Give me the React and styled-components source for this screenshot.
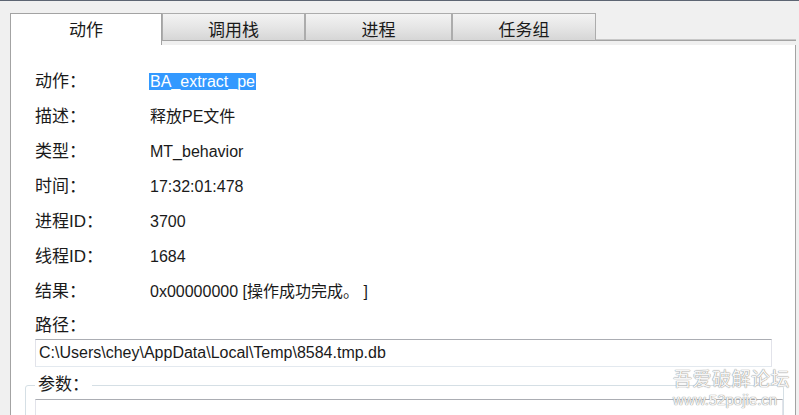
import React from "react";
import styled, { createGlobalStyle } from "styled-components";

const GlobalStyle = createGlobalStyle`
  html, body {
    margin: 0;
    padding: 0;
    background: #f0f0f0;
    overflow: hidden;
  }
`;

const Window = styled.div`
  position: relative;
  width: 799px;
  height: 415px;
  border-top: 1px solid #5d6573;
  box-sizing: border-box;
  padding-top: 12px;
  overflow: hidden;
  font-family: "Liberation Sans", "Noto Sans CJK SC", sans-serif;
  color: #1a1a1a;
`;

const TabStrip = styled.div`
  display: flex;
  align-items: flex-end;
  height: 32px;
  margin-left: 10px;
  width: 786px;
`;

const Tab = styled.div`
  box-sizing: border-box;
  width: ${(p) => p.$w}px;
  display: flex;
  align-items: center;
  justify-content: center;
  font-size: 17px;
  ${(p) =>
    p.$active
      ? `
    height: 32px;
    background: #fff;
    border: 1px solid #a3a3a3;
    border-bottom: none;
    padding-bottom: 2px;
  `
      : `
    height: 28px;
    margin-bottom: 4px;
    background: linear-gradient(#f3f3f3, #e6e6e6 50%, #d6d6d6);
    border: 1px solid #acacac;
    border-bottom-color: #a3a3a3;
    padding-top: 2px;
  `}
`;

const TabFiller = styled.div`
  flex: 1;
  height: 1px;
  margin-bottom: 4px;
  border-bottom: 1px solid #a3a3a3;
  background: #c8c8c8;
`;

const Panel = styled.div`
  margin-left: 10px;
  width: 786px;
  height: 400px;
  box-sizing: border-box;
  background: #fff;
  border-left: 1px solid #a3a3a3;
  border-right: 1px solid #a3a3a3;
  padding: 19px 23px 0 24px;
`;

const Fields = styled.div`
  display: grid;
  grid-template-columns: 115px 1fr;
  grid-auto-rows: 35px;
  align-items: center;
`;

const Label = styled.div`
  font-size: 17px;
  line-height: 22px;
`;

const Value = styled.div`
  font-size: 16px;
  line-height: 20px;
`;

const Selected = styled.span`
  background: #3399ff;
  color: #fff;
  padding: 0 1px;
  margin-left: -1px;
`;

const PathLabel = styled(Label)`
  height: 30px;
  padding-top: 6px;
  box-sizing: border-box;
`;

const TextBox = styled.div`
  box-sizing: border-box;
  height: ${(p) => p.$h || 28}px;
  border: 1px solid #e2e3ea;
  border-top-color: #abadb3;
  border-bottom-color: #e3e9ef;
  padding: 0 3px;
  display: flex;
  align-items: center;
  font-size: 16px;
  background: #fff;
`;

const GroupBox = styled.fieldset`
  margin: 8px -12px 0 -10px;
  padding: 4px 0 0 9px;
  border: 1px solid #d5dfe5;
  border-radius: 3px;
  min-width: 0;
`;

const Legend = styled.legend`
  padding: 0 3px;
  font-size: 17px;
  line-height: 20px;
`;

const Watermark = styled.div`
  position: absolute;
  right: 9px;
  bottom: 6px;
  display: flex;
  flex-direction: column;
  align-items: flex-start;
  color: #f6f6f6;
  text-shadow: 0 0 1px #8c8c8c, 0 0 1px #8c8c8c;
  pointer-events: none;
`;

const WatermarkTitle = styled.div`
  font-size: 19px;
  line-height: 22px;
  letter-spacing: 0.5px;
`;

const WatermarkUrl = styled.div`
  font-size: 15px;
  line-height: 18px;
`;

const tabs = [
  { name: "动作", w: 152, active: true },
  { name: "调用栈", w: 143 },
  { name: "进程", w: 147 },
  { name: "任务组", w: 144 },
];

const fields = [
  { label: "动作：", value: <Selected>BA_extract_pe</Selected> },
  { label: "描述：", value: "释放PE文件" },
  { label: "类型：", value: "MT_behavior" },
  { label: "时间：", value: "17:32:01:478" },
  { label: "进程ID：", value: "3700" },
  { label: "线程ID：", value: "1684" },
  { label: "结果：", value: "0x00000000 [操作成功完成。 ]" },
];

export default function App() {
  return (
    <>
      <GlobalStyle />
      <Window>
        <TabStrip>
          {tabs.map((t) => (
            <Tab key={t.name} $w={t.w} $active={t.active}>
              {t.name}
            </Tab>
          ))}
          <TabFiller />
        </TabStrip>
        <Panel>
          <Fields>
            {fields.map((f) => (
              <React.Fragment key={f.label}>
                <Label>{f.label}</Label>
                <Value>{f.value}</Value>
              </React.Fragment>
            ))}
          </Fields>
          <PathLabel>路径：</PathLabel>
          <TextBox>C:\Users\chey\AppData\Local\Temp\8584.tmp.db</TextBox>
          <GroupBox>
            <Legend>参数：</Legend>
            <TextBox $h={60} />
          </GroupBox>
        </Panel>
        <Watermark>
          <WatermarkTitle>吾爱破解论坛</WatermarkTitle>
          <WatermarkUrl>www.52pojie.cn</WatermarkUrl>
        </Watermark>
      </Window>
    </>
  );
}
